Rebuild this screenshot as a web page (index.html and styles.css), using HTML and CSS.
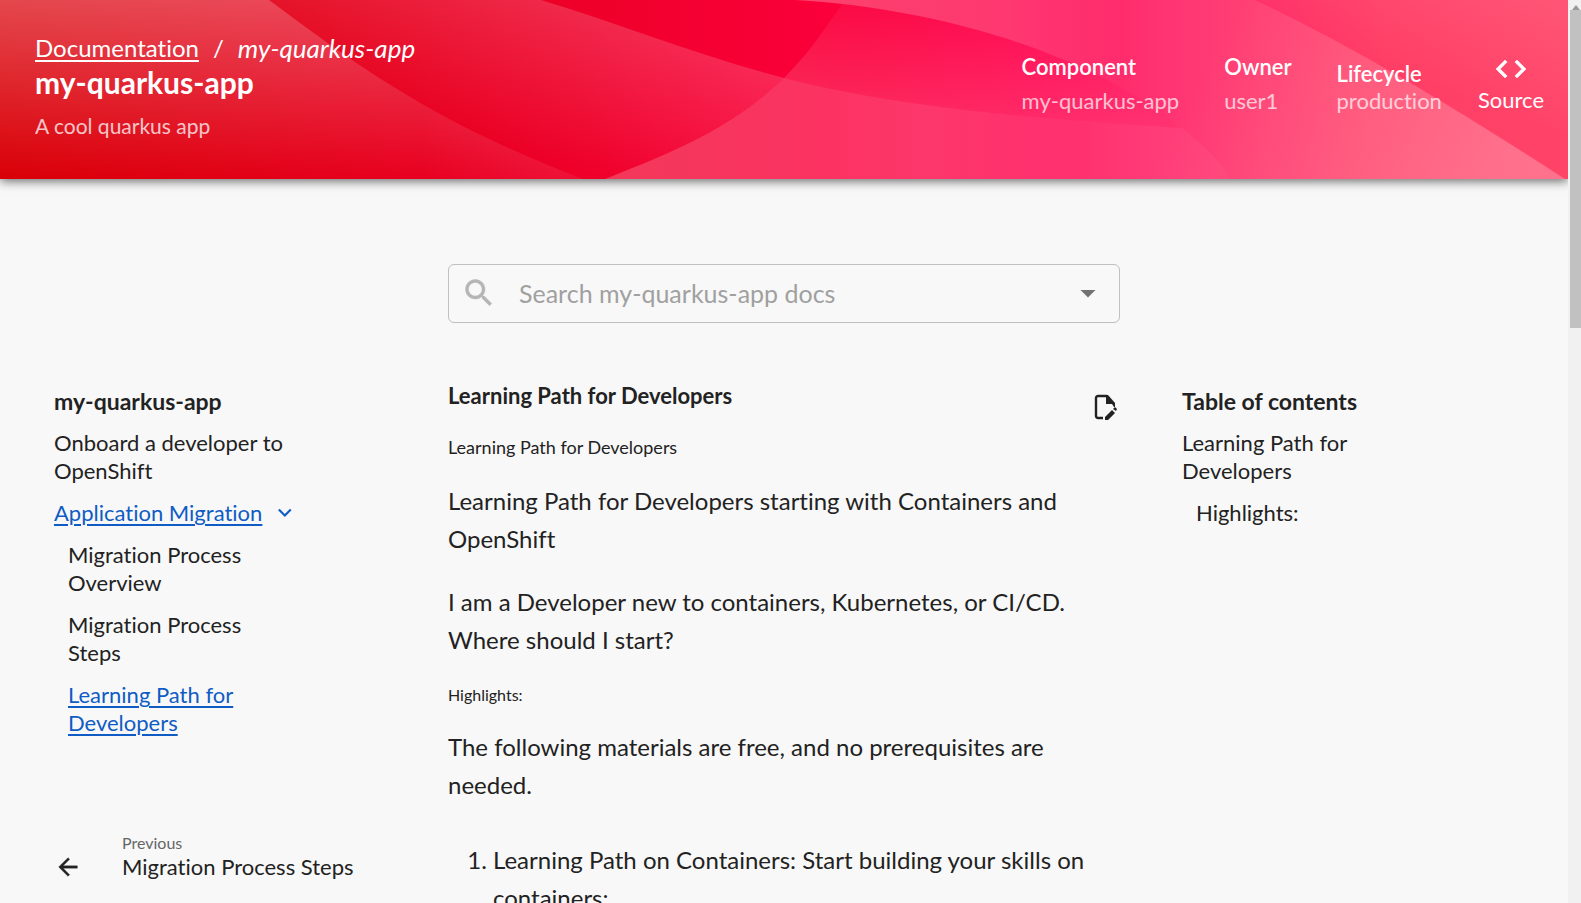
FILE: index.html
```
<!DOCTYPE html>
<html lang="en">
<head>
<meta charset="utf-8">
<title>my-quarkus-app docs</title>
<link rel="stylesheet" href="styles.css">
</head>
<body>
<div class="shell">
<div class="page">
  <header class="header">
    <svg class="header-art" viewBox="0 0 1568 179" preserveAspectRatio="none" aria-hidden="true">
      <defs>
        <linearGradient id="base" gradientUnits="userSpaceOnUse" x1="0" y1="0" x2="1568" y2="0">
          <stop offset="0" stop-color="#d90007"/><stop offset=".37" stop-color="#ee0029"/><stop offset=".53" stop-color="#fb003b"/><stop offset=".66" stop-color="#ff1258"/><stop offset=".74" stop-color="#ff2468"/><stop offset=".88" stop-color="#ff3d65"/><stop offset="1" stop-color="#ff4468"/>
        </linearGradient>
        <linearGradient id="fade" gradientUnits="userSpaceOnUse" x1="0" y1="0" x2="0" y2="179">
          <stop offset="0" stop-color="#fff" stop-opacity=".28"/><stop offset="1" stop-color="#fff" stop-opacity="0"/>
        </linearGradient>
        <linearGradient id="edge" gradientUnits="userSpaceOnUse" x1="420" y1="0" x2="560" y2="0">
          <stop offset="0" stop-color="#fff" stop-opacity="0"/><stop offset="1" stop-color="#fff" stop-opacity=".06"/>
        </linearGradient>
        <linearGradient id="mid" gradientUnits="userSpaceOnUse" x1="610" y1="0" x2="560" y2="165">
          <stop offset="0" stop-color="#fff" stop-opacity=".18"/><stop offset="1" stop-color="#fff" stop-opacity="0"/>
        </linearGradient>
        <linearGradient id="under" gradientUnits="userSpaceOnUse" x1="600" y1="0" x2="1240" y2="0">
          <stop offset="0" stop-color="#fff" stop-opacity=".22"/><stop offset=".5" stop-color="#fff" stop-opacity=".19"/><stop offset=".75" stop-color="#fff" stop-opacity=".11"/><stop offset="1" stop-color="#fff" stop-opacity=".11"/>
        </linearGradient>
        <linearGradient id="lens" gradientUnits="userSpaceOnUse" x1="960" y1="15" x2="930" y2="115">
          <stop offset="0" stop-color="#fff" stop-opacity=".01"/><stop offset="1" stop-color="#fff" stop-opacity=".13"/>
        </linearGradient>
        <linearGradient id="above" gradientUnits="userSpaceOnUse" x1="800" y1="0" x2="1260" y2="0">
          <stop offset="0" stop-color="#fff" stop-opacity=".27"/><stop offset=".45" stop-color="#fff" stop-opacity=".17"/><stop offset=".7" stop-color="#fff" stop-opacity=".06"/><stop offset="1" stop-color="#fff" stop-opacity=".09"/>
        </linearGradient>
        <linearGradient id="corner" gradientUnits="userSpaceOnUse" x1="1210" y1="60" x2="1480" y2="210">
          <stop offset="0" stop-color="#fff" stop-opacity="0"/><stop offset="1" stop-color="#fff" stop-opacity=".17"/>
        </linearGradient>
        <linearGradient id="right" gradientUnits="userSpaceOnUse" x1="1480" y1="-20" x2="1440" y2="90">
          <stop offset="0" stop-color="#fff" stop-opacity=".09"/><stop offset="1" stop-color="#fff" stop-opacity="0"/>
        </linearGradient>
        <clipPath id="lens-side"><path d="M845 0C825 28 812 50 784 78V179H1568V0Z"/></clipPath>
      </defs>
      <rect width="1568" height="179" fill="url(#base)"/>
      <path d="M0 0H269C350 60 430 121 583 179H0Z" fill="url(#fade)"/>
      <path d="M269 0C350 60 430 121 583 179H269Z" fill="url(#edge)"/>
      <path d="M269 0H541C620 24 700 56 784 78C737 123 690 146 605 179H583C430 121 350 60 269 0Z" fill="url(#mid)"/>
      <path d="M784 78C737 123 690 146 605 179H1230C1222 162 1203 145 1182 128C1050 120 900 108 784 78Z" fill="url(#under)"/>
      <path d="M795 0C960 10 1100 62 1182 128C1050 120 900 108 784 78V0Z" fill="url(#lens)" clip-path="url(#lens-side)"/>
      <path d="M795 0H1255C1333 37 1420 85 1565 179H1230C1222 162 1203 145 1182 128C1100 62 960 10 795 0Z" fill="url(#above)"/>
      <path d="M1255 0C1333 37 1420 85 1565 179H1145L1210 0Z" fill="url(#corner)"/>
      <path d="M1255 0H1568V179H1565C1420 85 1333 37 1255 0Z" fill="url(#right)"/>
    </svg>
    <div class="heading">
      <nav class="crumbs" aria-label="Breadcrumb"><a href="#">Documentation</a><span>/</span><em>my-quarkus-app</em></nav>
      <h1>my-quarkus-app</h1>
      <p class="muted">A cool quarkus app</p>
    </div>
    <dl class="facts">
      <div class="fact"><dt>Component</dt><dd>my-quarkus-app</dd></div>
      <div class="fact"><dt>Owner</dt><dd>user1</dd></div>
      <div class="fact tight"><dt>Lifecycle</dt><dd>production</dd></div>
    </dl>
    <a class="source" href="#">
      <svg width="36" height="36" viewBox="0 0 24 24" aria-hidden="true"><path fill="currentColor" stroke="currentColor" stroke-width=".4" d="M9.4 16.6 4.8 12l4.6-4.6L8 6l-6 6 6 6 1.400-1.400zm5.200 0 4.600-4.600-4.600-4.600L16 6l6 6-6 6-1.400-1.400z"/></svg>
      <span>Source</span>
    </a>
  </header>
  <main class="layout">
    <label class="search">
      <svg width="36" height="36" viewBox="0 0 24 24" aria-hidden="true"><path fill="#b5b5b5" stroke="#b5b5b5" stroke-width=".3" d="M15.500 14h-.79l-.28-.27C15.410 12.590 16 11.110 16 9.500 16 5.910 13.090 3 9.500 3S3 5.910 3 9.500 5.910 16 9.500 16c1.610 0 3.090-.59 4.230-1.570l.27.28v.79l5 4.990L20.490 19l-4.990-5zm-6 0C7.010 14 5 11.990 5 9.500S7.010 5 9.500 5 14 7.010 14 9.500 11.990 14 9.500 14z"/></svg>
      <input type="text" placeholder="Search my-quarkus-app docs" aria-label="Search my-quarkus-app docs">
      <button type="button" aria-label="Open"><svg width="36" height="36" viewBox="0 0 24 24" aria-hidden="true"><path fill="#737373" d="m7 10 5 5 5-5z"/></svg></button>
    </label>
    <nav class="side" aria-label="Pages">
      <h2>my-quarkus-app</h2>
      <ul class="pages">
        <li><a href="#">Onboard a developer to OpenShift</a></li>
        <li><span class="group"><a class="active" href="#">Application Migration</a><svg width="16" height="10" viewBox="0 0 16 10" aria-hidden="true"><path d="m1 1 7 7 7-7" fill="none" stroke="#0f5cc4" stroke-width="2.500"/></svg></span>
          <ul>
            <li><a href="#">Migration Process Overview</a></li>
            <li><a href="#">Migration Process Steps</a></li>
            <li><a class="active" href="#">Learning Path for Developers</a></li>
          </ul>
        </li>
      </ul>
      <a class="previous" href="#">
        <svg width="28" height="28" viewBox="0 0 24 24" aria-hidden="true"><path fill="currentColor" stroke="currentColor" stroke-width=".3" d="M20 11H7.830l5.590-5.590L12 4l-8 8 8 8 1.410-1.410L7.830 13H20v-2z"/></svg>
        <span><small>Previous</small>Migration Process Steps</span>
      </a>
    </nav>
    <article class="article">
      <button class="edit" type="button" aria-label="Edit this page">
        <svg width="24" height="27" viewBox="0 0 24 27" aria-hidden="true"><path d="M9 24H4a2 2 0 0 1-2-2V4a2 2 0 0 1 2-2h9" fill="none" stroke="#222" stroke-width="2.400"/><path d="M12 1h2l7 8v4h-1l-2-3h-6zM11 26v-3l7-7 3 3-7 7zM19 15l2-2 2 2-1 2z" fill="#222"/></svg>
      </button>
      <h1>Learning Path for Developers</h1>
      <h2>Learning Path for Developers</h2>
      <p>Learning Path for Developers starting with Containers and OpenShift</p>
      <p>I am a Developer new to containers, Kubernetes, or CI/CD. Where should I start?</p>
      <h3>Highlights:</h3>
      <p>The following materials are free, and no prerequisites are needed.</p>
      <ol><li>Learning Path on Containers: Start building your skills on containers:</li></ol>
    </article>
    <nav class="side toc" aria-label="Table of contents">
      <h2>Table of contents</h2>
      <ul class="pages">
        <li><a href="#">Learning Path for Developers</a>
          <ul><li><a href="#">Highlights:</a></li></ul>
        </li>
      </ul>
    </nav>
  </main>
</div>
<div class="scrollbar" aria-hidden="true"><span class="arrow"></span><span class="thumb"></span></div>
</div>
</body>
</html>
```
FILE: styles.css
```
* { box-sizing: border-box; }
body {
  margin: 0;
  background: #f8f8f8;
  color: #222;
  font-family: Lato, "Open Sans", sans-serif;
  font-variant-ligatures: none;
  font-size: 22px;
  line-height: 28px;
}
h1, h2, h3, p, ul, ol, dl, dd { margin: 0; padding: 0; }
ul { list-style: none; }
a { color: inherit; text-decoration: none; }
button { border: 0; padding: 0; background: none; }

.shell { display: flex; height: 100vh; overflow: hidden; }
.page { flex: 1; min-width: 0; overflow: hidden; }

.header {
  position: relative;
  display: flex;
  align-items: flex-start;
  padding: 31px 24px 39px 35px;
  color: #fff;
  box-shadow: 0 2px 10px rgba(0, 0, 0, .6);
}
.header-art { position: absolute; inset: 0; width: 100%; height: 100%; z-index: -1; }
.heading { flex: 1; }
.crumbs { display: flex; gap: 14px; font-size: 24px; line-height: 34px; }
.crumbs a { text-decoration: underline; text-decoration-thickness: 2px; text-underline-offset: 3px; }
.crumbs em { font-size: 26px; }
.heading h1 { font-size: 30px; line-height: 34px; font-weight: 700; }
.muted { margin-top: 13px; font-size: 21px; opacity: .75; }
.facts { display: flex; }
.fact { margin-right: 45px; padding-top: 22px; }
.fact dt { font-weight: 600; }
.fact dd { margin-top: 6px; opacity: .7; }
.tight { padding-top: 29px; margin-right: 36px; }
.tight dd { margin-top: 0; line-height: 26px; }
.source { display: flex; flex-direction: column; align-items: center; padding-top: 20px; line-height: 26px; }

.layout { display: grid; grid-template-columns: minmax(0, 2fr) minmax(0, 3fr) minmax(0, 2fr); padding-top: 85px; }
.search {
  grid-column: 2;
  display: flex;
  align-items: center;
  gap: 22px;
  height: 59px;
  padding: 0 13px 2px 12px;
  border: 1px solid #c0c0c0;
  border-radius: 6px;
}
.search input {
  flex: 1;
  min-width: 0;
  border: 0;
  padding: 0;
  background: none;
  font: inherit;
  font-size: 25px;
  outline: 0;
}
.search input::placeholder { color: #a0a0a0; opacity: 1; }
.search button { display: flex; }

.side { grid-row: 2; grid-column: 1; padding: 64px 20px 0 54px; }
.side h2 { font-size: 23px; line-height: 28px; font-weight: 700; }
.side li { margin-top: 14px; }
.side li li { padding-left: 14px; }
.side .active { color: #0f5cc4; text-decoration: underline; text-decoration-thickness: 2px; text-underline-offset: 3px; }
.pages { padding-right: 136px; }
.group { display: flex; align-items: center; gap: 16px; white-space: nowrap; }
.previous { display: flex; align-items: flex-end; gap: 40px; margin-top: 96px; white-space: nowrap; }
.previous small { display: block; font-size: 16px; line-height: 20px; color: #666; }
.toc { grid-column: 3; padding-left: 62px; }

.article { position: relative; grid-row: 2; padding-top: 59px; font-size: 24px; line-height: 38px; }
.article h1 { font-size: 22px; line-height: 28px; font-weight: 700; }
.article h2 { margin: 25px 0 23px; font-size: 18px; line-height: 24px; font-weight: 400; }
.article h3 { margin: 24px 0 21px; font-size: 16px; line-height: 24px; font-weight: 400; }
.article p + p { margin-top: 25px; }
.article ol { margin-top: 37px; padding-left: 45px; }
.edit { position: absolute; top: 71px; right: 2px; display: flex; }

.scrollbar { flex: 0 0 13px; padding-left: 2px; background: #f1f1f1; }
.arrow { display: block; height: 10px; width: 0; border: 4px solid transparent; border-top-width: 1px; border-bottom: 5px solid #999; margin-left: 2px; }
.thumb { display: block; height: 318px; background: #c1c1c1; }
```
